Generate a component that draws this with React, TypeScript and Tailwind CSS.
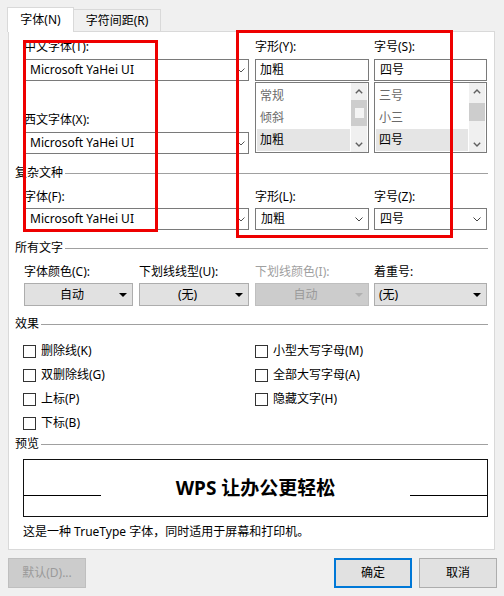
const FONT = "font-['Noto_Sans','Noto_Sans_CJK_SC',sans-serif]";

function Chevron({ className }: { className?: string }) {
  return (
    <svg width="8" height="5" viewBox="0 0 8 5" className={className}>
      <path d="M0.5 0.5 L4 4 L7.5 0.5" fill="none" stroke="currentColor" strokeWidth="1" />
    </svg>
  );
}

function Caret({ className }: { className?: string }) {
  return (
    <svg width="8" height="4" viewBox="0 0 8 4" className={className}>
      <path d="M0 0 H8 L4 4 Z" fill="currentColor" />
    </svg>
  );
}

function ScrollArrow({ up }: { up?: boolean }) {
  return (
    <svg width="8" height="5" viewBox="0 0 8 5" className="text-[#606060]">
      <path
        d={up ? "M0.8 4.2 L4 1 L7.2 4.2" : "M0.8 0.8 L4 4 L7.2 0.8"}
        fill="none"
        stroke="currentColor"
        strokeWidth="1.4"
      />
    </svg>
  );
}

function Section({ title }: { title: string }) {
  return (
    <div className="flex h-4 items-center">
      <span>{title}</span>
      <div className="ml-[2px] h-px flex-1 bg-[#a0a0a0]" />
    </div>
  );
}

function Combo({ value, pr, large }: { value: string; pr: string; large?: boolean }) {
  return (
    <div className={`flex h-[22px] items-center border border-[#7a7a7a] bg-white pl-[5px] ${pr}`}>
      <span className="flex-1">{value}</span>
      {large ? <Chevron className="text-[#444]" /> : <Chevron className="text-[#555]" />}
    </div>
  );
}

function ListBox({
  items,
  selected,
  thumb,
}: {
  items: string[];
  selected: number;
  thumb: "hollow" | "solid";
}) {
  return (
    <div className="mt-[1px] flex h-[71px] border border-[#7a7a7a] bg-white">
      <div className="flex-1 pl-px pt-[2px]">
        {items.map((it, i) => (
          <div
            key={it}
            className={
              i === selected
                ? "flex h-[22px] items-center bg-[#e5e5e5] pl-[3px] text-black"
                : "flex h-[22px] items-center pl-[3px] text-[#6a6a6a]"
            }
          >
            {it}
          </div>
        ))}
      </div>
      <div className="ml-px mr-px flex w-[16px] flex-col items-center bg-[#f0f0f0]">
        <div className="flex h-[17px] items-center">
          <ScrollArrow up />
        </div>
        {thumb === "hollow" ? (
          <div className="flex h-[26px] w-[16px] items-center justify-center bg-[#cdcdcd]">
            <div className="h-[10px] w-[9px] bg-[#f4f4f4]" />
          </div>
        ) : (
          <div className="mt-[3px] h-[18px] w-[16px] bg-[#cdcdcd]" />
        )}
        <div className="flex-1" />
        <div className="flex h-[16px] items-center">
          <ScrollArrow />
        </div>
      </div>
    </div>
  );
}

function DropButton({
  value,
  w,
  left,
  disabled,
}: {
  value: string;
  w: string;
  left?: boolean;
  disabled?: boolean;
}) {
  return (
    <div
      className={
        disabled
          ? `flex h-[23px] items-center border border-[#bfbfbf] bg-[#cccccc] text-[#9a9a9a] ${w}`
          : `flex h-[23px] items-center border border-[#adadad] bg-[#e1e1e1] ${w}`
      }
    >
      <span className={left ? "flex-1 pl-[4px]" : "flex-1 text-center"}>{value}</span>
      {disabled ? (
        <Caret className="mr-[5px] text-[#b0b0b0]" />
      ) : (
        <Caret className="mr-[5px] text-black" />
      )}
    </div>
  );
}

function Check({ label }: { label: string }) {
  return (
    <div className="flex h-6 items-center">
      <div className="h-[13px] w-[13px] border border-[#333] bg-white" />
      <span className="ml-[5px]">{label}</span>
    </div>
  );
}

export default function App() {
  return (
    <div
      className={`relative h-[596px] w-[504px] overflow-hidden bg-[#f0f0f0] text-[12px] leading-4 text-black ${FONT}`}
    >
      <div className="mt-[7px] flex h-[24px] items-end pl-[7px]">
        <div className="relative z-10 -mb-px flex h-[25px] w-[67px] items-center justify-center border-x border-t border-[#d9d9d9] bg-white">
          字体(N)
        </div>
        <div className="flex h-[22px] w-[87px] items-center justify-center border-r border-t border-[#d9d9d9]">
          字符间距(R)
        </div>
      </div>

      <div className="ml-[8px] h-[519px] w-[487px] border border-[#d9d9d9] bg-white px-[6px] pt-[7px]">
        <div className="ml-[9px] flex">
          <div className="w-[225px]">
            <div className="h-4">中文字体(T):</div>
            <div className="mt-[4px]">
              <Combo value="Microsoft YaHei UI" pr="pr-[3px]" />
            </div>
            <div className="mt-[31px] h-4">西文字体(X):</div>
            <div className="mt-[4px]">
              <Combo value="Microsoft YaHei UI" pr="pr-[3px]" />
            </div>
          </div>
          <div className="ml-[6px] w-[114px]">
            <div className="h-4">字形(Y):</div>
            <div className="mt-[4px] flex h-[22px] items-center border border-[#7a7a7a] bg-white pl-[4px]">
              加粗
            </div>
            <ListBox items={["常规", "倾斜", "加粗"]} selected={2} thumb="hollow" />
          </div>
          <div className="ml-[5px] w-[113px]">
            <div className="h-4">字号(S):</div>
            <div className="mt-[4px] flex h-[22px] items-center border border-[#7a7a7a] bg-white pl-[5px]">
              四号
            </div>
            <ListBox items={["三号", "小三", "四号"]} selected={2} thumb="solid" />
          </div>
        </div>

        <div className="mt-[11px]">
          <Section title="复杂文种" />
        </div>
        <div className="ml-[9px] mt-[8px] flex">
          <div className="w-[225px]">
            <div className="h-4">字体(F):</div>
            <div className="mt-[3px]">
              <Combo value="Microsoft YaHei UI" pr="pr-[3px]" />
            </div>
          </div>
          <div className="ml-[6px] w-[114px]">
            <div className="h-4">字形(L):</div>
            <div className="mt-[3px]">
              <Combo value="加粗" pr="pr-[5px]" large />
            </div>
          </div>
          <div className="ml-[5px] w-[113px]">
            <div className="h-4">字号(Z):</div>
            <div className="mt-[3px]">
              <Combo value="四号" pr="pr-[5px]" large />
            </div>
          </div>
        </div>

        <div className="mt-[10px]">
          <Section title="所有文字" />
        </div>
        <div className="ml-[9px] mt-[8px] flex">
          <div className="w-[109px]">
            <div className="h-4">字体颜色(C):</div>
            <div className="mt-[3px]">
              <DropButton value="自动" w="w-[109px]" />
            </div>
          </div>
          <div className="ml-[6px] w-[110px]">
            <div className="h-4">下划线线型(U):</div>
            <div className="mt-[3px]">
              <DropButton value="(无)" w="w-[110px]" />
            </div>
          </div>
          <div className="ml-[6px] w-[114px]">
            <div className="h-4 text-[#a0a0a0]">下划线颜色(I):</div>
            <div className="mt-[3px]">
              <DropButton value="自动" w="w-[114px]" disabled />
            </div>
          </div>
          <div className="ml-[5px] w-[113px]">
            <div className="h-4">着重号:</div>
            <div className="mt-[3px]">
              <DropButton value="(无)" w="w-[113px]" left />
            </div>
          </div>
        </div>

        <div className="mt-[10px]">
          <Section title="效果" />
        </div>
        <div className="ml-[8px] mt-[7px] grid grid-cols-[232px_1fr]">
          <Check label="删除线(K)" />
          <Check label="小型大写字母(M)" />
          <Check label="双删除线(G)" />
          <Check label="全部大写字母(A)" />
          <Check label="上标(P)" />
          <Check label="隐藏文字(H)" />
          <Check label="下标(B)" />
        </div>

        <div className="mt-[1px]">
          <Section title="预览" />
        </div>
        <div className="ml-[8px] mt-[7px] flex h-[58px] w-[465px] items-start border border-[#111] bg-white">
          <div className="mt-[35px] h-px w-[77px] bg-black" />
          <div className="mt-[16px] flex-1 text-center text-[19px] font-bold leading-6">
            WPS 让办公更轻松
          </div>
          <div className="mt-[35px] h-px w-[77px] bg-black" />
        </div>
        <div className="ml-[8px] mt-[7px] h-4">
          这是一种 TrueType 字体，同时适用于屏幕和打印机。
        </div>
      </div>

      <div className="mt-[8px] flex pl-[8px] pr-[7px]">
        <div className="flex h-[30px] w-[78px] items-center justify-center border border-[#bfbfbf] bg-[#cccccc] text-[#9a9a9a]">
          默认(D)...
        </div>
        <div className="ml-auto flex h-[30px] w-[78px] items-center justify-center border-2 border-[#0078d7] bg-[#e1e1e1]">
          确定
        </div>
        <div className="ml-[7px] flex h-[30px] w-[78px] items-center justify-center border border-[#adadad] bg-[#e1e1e1]">
          取消
        </div>
      </div>

      <div className="absolute left-[23px] top-[40px] h-[192px] w-[135px] border-[3px] border-[#ee0000]" />
      <div className="absolute left-[236px] top-[30px] h-[208px] w-[217px] border-[3px] border-[#ee0000]" />
    </div>
  );
}
